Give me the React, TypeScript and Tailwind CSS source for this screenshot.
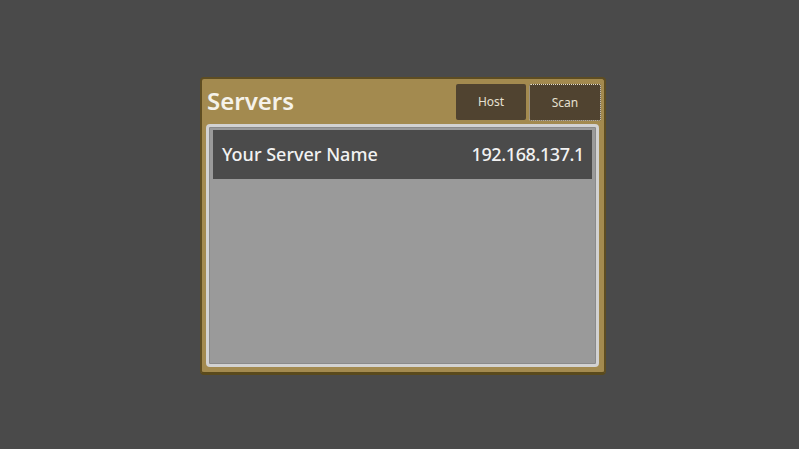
import React from 'react';

const App: React.FC = () => {
  return (
    <div
      className="w-[799px] h-[449px] bg-[#4a4a4a] flex items-start justify-center pt-[77px]"
      style={{ fontFamily: '"Noto Sans", "Open Sans", sans-serif' }}
    >
      <div className="w-[406px] h-[298px] ml-[7px] rounded-[4px] bg-[#a38a4f] border-2 border-[#5e4d22] border-b-[3px] border-b-[#5a4a1c] flex flex-col pl-[4px] pr-[5px] pt-[5px] pb-[5px]">
        <div className="flex items-start justify-between h-[40px]">
          <h1 className="text-[24px] font-semibold text-[#f5f2ea] leading-none mt-[5px] ml-[1px]">Servers</h1>
          <div className="flex gap-[3px] -mr-[2px]">
            <button className="w-[70px] h-[36px] rounded-[2px] bg-[#504330] text-[12px] text-[#e6e0d0]">
              Host
            </button>
            <button className="w-[72px] h-[37px] rounded-[2px] bg-[#504330] text-[12px] text-[#e6e0d0] border border-dotted border-[#e8e2d0]">
              Scan
            </button>
          </div>
        </div>
        <div className="flex-1 rounded-[4px] bg-[#9a9a9a] border-[3px] border-[#d2d2d2] shadow-[inset_0_0_0_1px_#8a8a8a] px-[4px] pt-[3px]">
          <div className="h-[49px] bg-[#4b4b4b] flex items-center justify-between pl-[9px] pr-[8px] text-[18px] font-medium text-[#f2f2f2]">
            <span>Your Server Name</span>
            <span className="tracking-[-0.4px]">192.168.137.1</span>
          </div>
        </div>
      </div>
    </div>
  );
};

export default App;
